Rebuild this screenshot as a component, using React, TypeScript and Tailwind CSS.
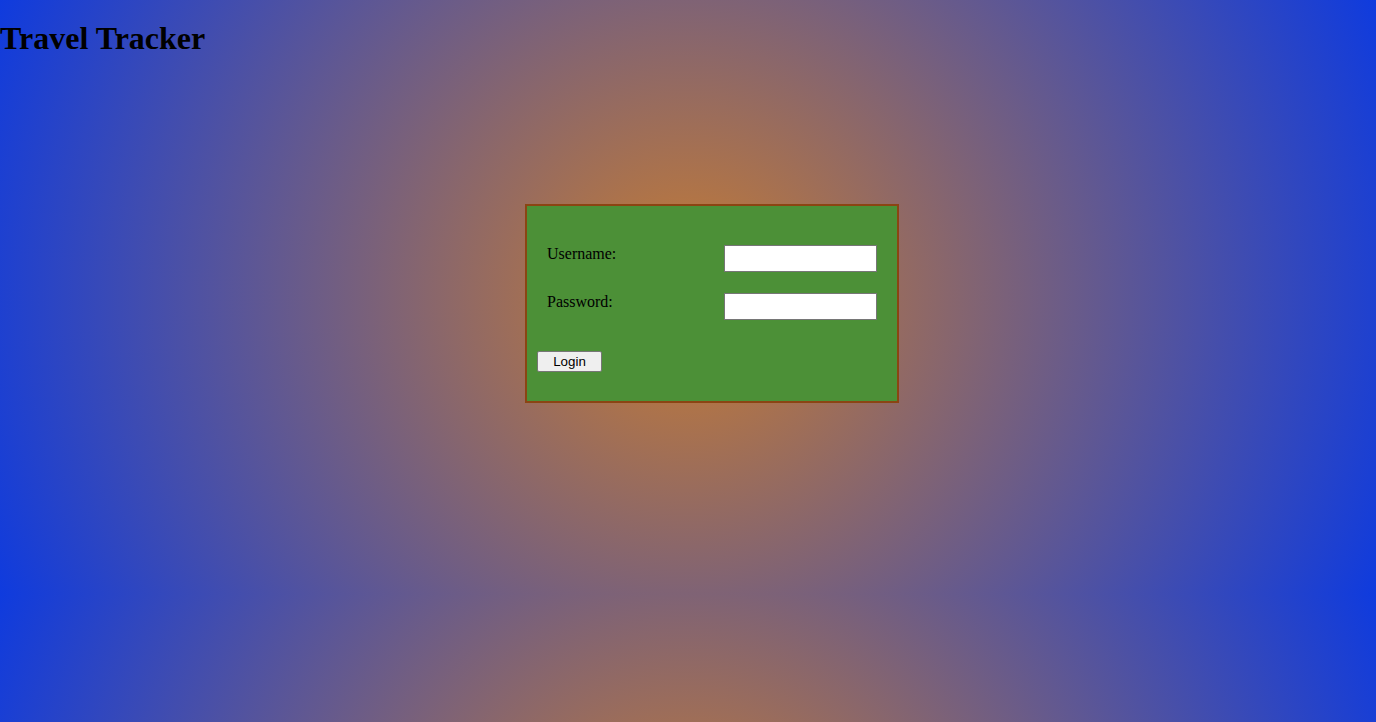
const LoginPage = () => {
  const fields = [
    { label: "Username:", type: "text" },
    { label: "Password:", type: "password" },
  ];

  return (
    <div className="flow-root min-h-screen bg-[radial-gradient(circle_farthest-corner,#c97d30,#0f3bde)] bg-[length:100%_594px] bg-repeat font-['Liberation_Serif',serif] text-black">
      <h1 className="mt-[20px] text-[32px] font-bold leading-[37px]">
        Travel Tracker
      </h1>

      <div className="mt-[147px] flex justify-center pl-12">
        <form
          className="w-[374px] border-2 border-[#8b4513] bg-[#4c9037] px-[10px] pt-[39px] pb-[29px]"
          onSubmit={(e) => e.preventDefault()}
        >
          <div className="flex flex-col gap-[21px] px-[10px]">
            {fields.map((field) => (
              <div key={field.label} className="flex items-start justify-between">
                <label className="text-[16px] leading-[18px]">{field.label}</label>
                <input
                  type={field.type}
                  className="h-[27px] w-[153px] border border-[#767676] bg-white px-[2px] text-[13px] outline-none"
                />
              </div>
            ))}
          </div>

          <button
            type="submit"
            className="mt-[31px] block h-[21px] w-[65px] rounded-[2px] border border-[#767676] bg-[#efefef] font-['Liberation_Sans',Arial,sans-serif] text-[13.33px] leading-none text-black"
          >
            Login
          </button>
        </form>
      </div>
    </div>
  );
};

export default LoginPage;
